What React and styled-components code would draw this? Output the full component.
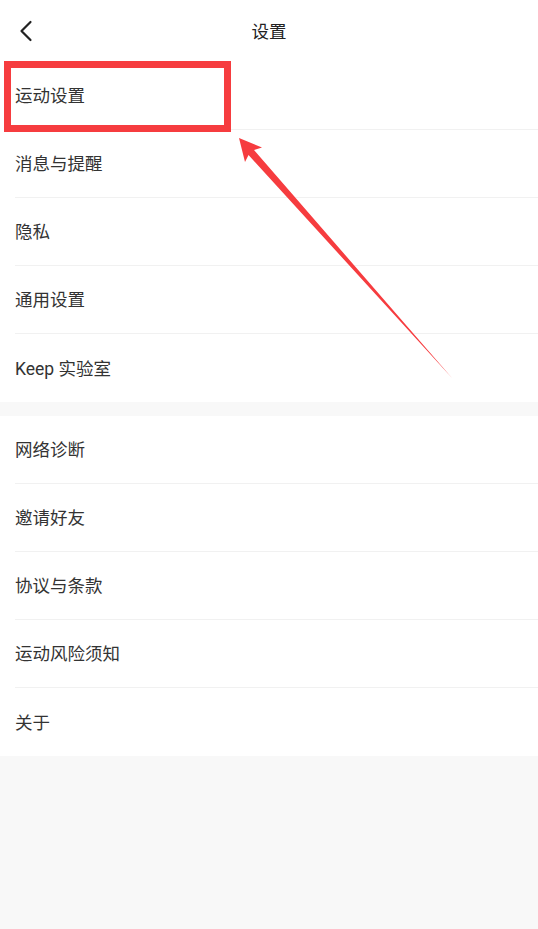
import React from "react";
import styled, { createGlobalStyle } from "styled-components";

const Global = createGlobalStyle`
  html, body { margin: 0; padding: 0; background: #f8f8f8; }
  body { font-family: Roboto, "Noto Sans CJK SC", sans-serif; -webkit-font-smoothing: antialiased; }
`;

const Page = styled.div`
  position: relative;
  width: 538px;
  min-height: 929px;
  background: #f8f8f8;
`;

const Header = styled.header`
  height: 62px;
  box-sizing: border-box;
  padding-bottom: 2px;
  display: flex;
  align-items: center;
  justify-content: center;
  position: relative;
  background: #ffffff;
`;

const BackButton = styled.button`
  position: absolute;
  left: 14px;
  top: 16px;
  width: 24px;
  height: 30px;
  border: 0;
  padding: 0;
  background: transparent;
  display: flex;
  align-items: center;
  justify-content: center;
`;

const Title = styled.h1`
  margin: 0;
  font-size: 17.5px;
  font-weight: 400;
  color: #222;
`;

const Group = styled.ul`
  list-style: none;
  margin: 0 0 ${(p) => p.$gap || 0}px;
  padding: 0 0 0 15px;
  background: #ffffff;
`;

const Row = styled.li`
  height: 68px;
  box-sizing: border-box;
  padding-bottom: 2px;
  display: flex;
  align-items: center;
  font-size: 17.5px;
  color: #333;
  border-bottom: 1px solid #f1f1f1;
  &:last-child { border-bottom: 0; }
`;

const Highlight = styled.div`
  position: absolute;
  left: 4px;
  top: 61px;
  width: 227px;
  height: 71px;
  box-sizing: border-box;
  border: 7px solid #f63c3f;
  pointer-events: none;
`;

const Overlay = styled.svg`
  position: absolute;
  left: 0;
  top: 0;
  pointer-events: none;
`;

const groups = [
  ["运动设置", "消息与提醒", "隐私", "通用设置", "Keep 实验室"],
  ["网络诊断", "邀请好友", "协议与条款", "运动风险须知", "关于"],
];

export default function App() {
  return (
    <Page>
      <Global />
      <Header>
        <BackButton aria-label="返回">
          <svg width="14" height="22" viewBox="0 0 14 22">
            <path d="M11.5 2 L2.5 11 L11.5 20" fill="none" stroke="#222" strokeWidth="2.2" strokeLinecap="round" strokeLinejoin="round" />
          </svg>
        </BackButton>
        <Title>设置</Title>
      </Header>
      {groups.map((g, i) => (
        <Group key={i} $gap={i === 0 ? 14 : 0}>
          {g.map((t) => (
            <Row key={t}>{t}</Row>
          ))}
        </Group>
      ))}
      <Highlight />
      <Overlay width="538" height="929" viewBox="0 0 538 929">
        <polygon
          points="239,138 262,147.5 254,150 452,378 248.5,155 245,162"
          fill="#f63c3f"
        />
      </Overlay>
    </Page>
  );
}
